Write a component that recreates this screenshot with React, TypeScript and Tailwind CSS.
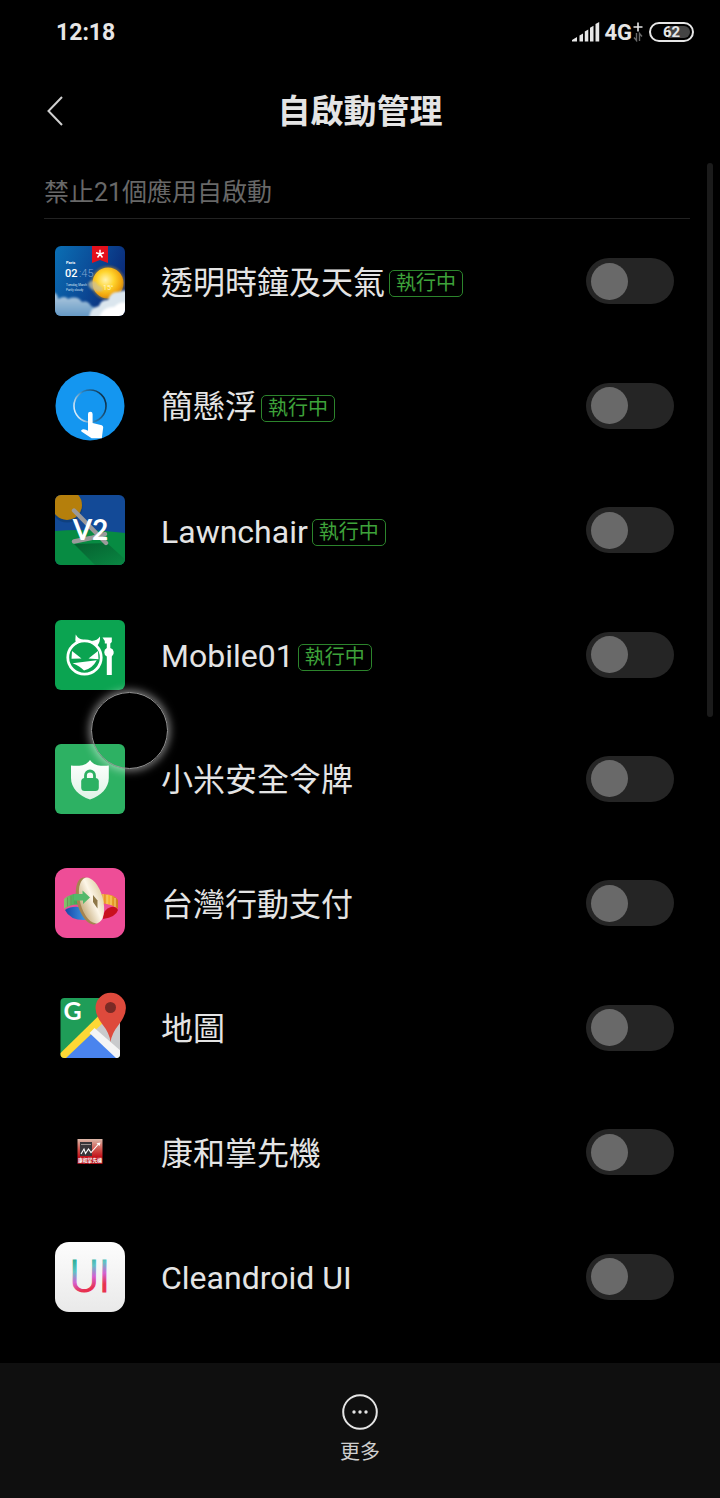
import React, { useState } from 'react';

interface AppItem {
  id: string;
  name: string;
  running?: boolean;
  icon: React.ReactNode;
}

const ClockWeatherIcon = () => (
  <svg viewBox="0 0 70 70" className="w-full h-full">
    <defs>
      <linearGradient id="sky" x1="0" y1="0" x2="1" y2="0.4">
        <stop offset="0" stopColor="#0a6fb4" />
        <stop offset="0.55" stopColor="#0b4c98" />
        <stop offset="1" stopColor="#0a2a78" />
      </linearGradient>
      <radialGradient id="sun" cx="0.42" cy="0.4" r="0.6">
        <stop offset="0" stopColor="#fff3b0" />
        <stop offset="0.45" stopColor="#ffd52e" />
        <stop offset="0.85" stopColor="#f0a30c" />
        <stop offset="1" stopColor="#c98a1c" />
      </radialGradient>
      <linearGradient id="cloud" x1="0" y1="0" x2="0" y2="1">
        <stop offset="0" stopColor="#b9cfe2" />
        <stop offset="1" stopColor="#5f95c2" />
      </linearGradient>
      <filter id="cloudSoft"><feGaussianBlur stdDeviation="1.1" /></filter>
      <clipPath id="clockClip"><rect width="70" height="70" rx="6" /></clipPath>
    </defs>
    <g clipPath="url(#clockClip)">
      <rect width="70" height="70" fill="url(#sky)" />
      <circle cx="53" cy="37" r="17" fill="#b98a2a" opacity="0.5" filter="url(#cloudSoft)" />
      <circle cx="53" cy="37" r="15.5" fill="url(#sun)" />
      <g filter="url(#cloudSoft)">
        <path d="M-2 72V46q5 2 5 7 7-4 10 0 9-4 14 3 6-2 9 4 8 2 9 12z" fill="url(#cloud)" />
        <path d="M33 38q2-4 6-3 3 1 4 4 5 1 5 5-5 3-9 0-5-1-6-6z" fill="#c9c3a4" opacity="0.7" />
        <path d="M34 72q2-11 10-12 2-7 9-6 3-9 10-8 8-3 9 0v26z" fill="#dbe6ee" />
        <path d="M44 72q4-12 15-11 8-7 13-3v14z" fill="#fff" />
      </g>
      <path d="M37 0h16v17l-8-3-8 3z" fill="#e3101c" />
      <path d="M45 8V3.800M45 8l-4-1.300M45 8l4-1.300M45 8l-2.500 3.500M45 8l2.500 3.500" stroke="#fff" strokeWidth="1.500" fill="none" />
      <text x="11" y="18" fontSize="4" fill="#fff" fontWeight="700" fontFamily="Roboto, sans-serif">Paris</text>
      <text x="10" y="31" fontSize="11" fill="#fff" fontWeight="500" fontFamily="Roboto, sans-serif">02</text>
      <text x="24" y="31" fontSize="11" fill="#7fa5cf" fontWeight="300" fontFamily="Roboto, sans-serif">:45</text>
      <text x="11" y="40" fontSize="3" fill="#cfe0f0" fontFamily="Roboto, sans-serif">Tuesday, March</text>
      <text x="11" y="45" fontSize="3" fill="#cfe0f0" fontFamily="Roboto, sans-serif">Partly cloudy</text>
      <text x="48" y="44" fontSize="7" fill="#fff3c8" fontFamily="Roboto, sans-serif">15°</text>
    </g>
  </svg>
);

const FloatTouchIcon = () => (
  <svg viewBox="0 0 70 70" className="w-full h-full">
    <defs>
      <linearGradient id="touchRing" x1="0" y1="0.7" x2="1" y2="0.3">
        <stop offset="0" stopColor="#e8f5ff" />
        <stop offset="0.45" stopColor="#2f80b8" />
        <stop offset="1" stopColor="#0b2e48" />
      </linearGradient>
    </defs>
    <circle cx="35" cy="35" r="34.5" fill="#1496f0" />
    <circle cx="35" cy="35" r="16" fill="none" stroke="url(#touchRing)" strokeWidth="1.6" />
    <path d="M33 43a2.300 2.300 0 0 1 4.600 0v9l9.200 2.200q1.600.6 1.400 2.400l-1.400 10.600H36.600L26.400 60.400q-1-1.600 1-2 3-.5 5.600 1.400z" fill="#fff" />
  </svg>
);

const LawnchairIcon = () => (
  <svg viewBox="0 0 70 70" className="w-full h-full">
    <defs>
      <clipPath id="lawnClip"><rect width="70" height="70" rx="6" /></clipPath>
      <linearGradient id="lawnShade" x1="0" y1="0" x2="1" y2="1">
        <stop offset="0" stopColor="#05602f" />
        <stop offset="1" stopColor="#0a8a44" />
      </linearGradient>
    </defs>
    <g clipPath="url(#lawnClip)">
      <rect width="70" height="70" fill="#134a97" />
      <circle cx="12" cy="12" r="15.500" fill="#0d3a70" opacity="0.6" />
      <circle cx="12" cy="10" r="15" fill="#b57f0c" />
      <path d="M0 36q30-3 70 2v32H0z" fill="#078b42" />
      <path d="M19 49l33-1 22 20v4H42z" fill="url(#lawnShade)" />
      <path d="M19 15.500L51 48M19 46.500l17-3.500 14-4" stroke="#9a9a9a" strokeWidth="4.400" strokeLinecap="round" fill="none" />
      <text x="35.500" y="45" textAnchor="middle" fontSize="28" fontWeight="700" fill="#fff" fontFamily="Lato, sans-serif">V2</text>
    </g>
  </svg>
);

const Mobile01Icon = () => (
  <svg viewBox="0 0 70 70" className="w-full h-full">
    <rect width="70" height="70" rx="6" fill="#0ba451" />
    <circle cx="29.500" cy="37.500" r="16.700" fill="none" stroke="#fff" strokeWidth="2.800" />
    <path d="M20.700 14.500q2.500 4.500 8 5.500l-7.500 4.500q-1.500-4-.5-10zM45 16.500q-2.500 4-8.500 4.500l5.500 5q3.500-4 3-9.500z" fill="#fff" />
    <path d="M17 31l9.500 7.500-10 .3zM43 31l-9.500 7.500 10 .8zM17.500 43.300l24.200-3q-4 8-12.700 10.300-4-4.500-11.500-7.300z" fill="#fff" />
    <path d="M47.500 17.500h9.300v4.500l-1.500 1.500v4.500a4.800 4.800 0 0 1 1.500 8.500V55h-5V36.500a4.800 4.800 0 0 1 0-8.500v-4.500h-2q.5-3-2.300-6z" fill="#fff" />
  </svg>
);

const TokenIcon = () => (
  <svg viewBox="0 0 70 70" className="w-full h-full">
    <defs>
      <linearGradient id="shield" x1="0" y1="0" x2="0" y2="1">
        <stop offset="0" stopColor="#fff" />
        <stop offset="1" stopColor="#dff3e6" />
      </linearGradient>
    </defs>
    <rect width="70" height="70" rx="6" fill="#2db163" />
    <path d="M35 16q2.500 4 7.500 5.200 5.500 1 11.300.3v12.500c0 10-8 18-18.800 21.500C24 52 16 44 16 34V21.500q6 .7 11.500-.3Q32.500 20 35 16z" fill="url(#shield)" />
    <rect x="26.200" y="34" width="17.600" height="13" rx="3.500" fill="#2db163" />
    <path d="M30.500 35v-3.500a4.500 4.500 0 0 1 9 0v3.500" fill="none" stroke="#2db163" strokeWidth="2.800" />
  </svg>
);

const TaiwanPayIcon = () => (
  <svg viewBox="0 0 70 70" className="w-full h-full">
    <defs>
      <linearGradient id="coin" x1="0" y1="0.600" x2="1" y2="0.300">
        <stop offset="0" stopColor="#c9b184" />
        <stop offset="0.550" stopColor="#fdf6e8" />
        <stop offset="1" stopColor="#e2d3ad" />
      </linearGradient>
      <linearGradient id="payGreen" x1="0" y1="0" x2="1" y2="0">
        <stop offset="0" stopColor="#8cbf6d" />
        <stop offset="1" stopColor="#2faf57" />
      </linearGradient>
      <linearGradient id="payOrange" x1="0" y1="0" x2="1" y2="0">
        <stop offset="0" stopColor="#d9661f" />
        <stop offset="0.500" stopColor="#f7b733" />
        <stop offset="1" stopColor="#cf7a1c" />
      </linearGradient>
      <linearGradient id="payBlue" x1="0" y1="0" x2="1" y2="0">
        <stop offset="0" stopColor="#1746a8" />
        <stop offset="1" stopColor="#3f9be6" />
      </linearGradient>
    </defs>
    <rect width="70" height="70" rx="12" fill="#ee4d97" />
    <path d="M10 42q6-4 14-3l8 13q-17 1-22-10z" fill="url(#payBlue)" />
    <path d="M9 41V31q5-5 14-5.500v11q-9 0-14 4.500z" fill="url(#payGreen)" />
    <path d="M12.500 29.500v9M16 28v9M19.500 27v9" stroke="#6a8f55" strokeWidth="0.800" />
    <path d="M48 51q0-10 8-12 5-1 7 3-2 7-15 9z" fill="#c8101e" />
    <path d="M44 26q15-1 19 6v9q-5-5-19-6z" fill="url(#payOrange)" />
    <path d="M48 26v9M52 27v9M56 28v9M60 30v9" stroke="#f9d77a" strokeWidth="1" />
    <ellipse cx="33.500" cy="33" rx="11.500" ry="24" transform="rotate(-15 33.500 33)" fill="#a58450" />
    <ellipse cx="36.500" cy="32.500" rx="11.500" ry="23.500" transform="rotate(-15 36.500 32.500)" fill="url(#coin)" />
    <path d="M38 27l4.500 5.500v8L38 34z" fill="#8d7748" />
    <path d="M19 26h8.500v-3.500l7.500 7-7 6.500v-3.500h-9z" fill="#53b96b" />
  </svg>
);

const MapsIcon = () => (
  <svg viewBox="0 0 70 70" className="w-full h-full overflow-visible">
    <defs>
      <clipPath id="mapClip"><rect x="5.500" y="5" width="59.500" height="60" rx="4" /></clipPath>
    </defs>
    <g clipPath="url(#mapClip)">
      <rect x="5" y="5" width="61" height="60" fill="#1f9d58" />
      <path d="M36 37L66 5v60H60z" fill="#c9cacc" />
      <path d="M8 65l27.500-25L62 65z" fill="#4a84ee" />
      <path d="M5 65V60.500L46 20.500l4 7.500L11 65z" fill="#fdd835" />
      <path d="M34.500 40l5-5L66 58v7h-5z" fill="#f5f5f5" />
    </g>
    <text x="8.500" y="27" fontSize="25" fontWeight="700" fill="#fff" fontFamily="Lato, sans-serif">G</text>
    <path d="M55.500 49q-1-9-8-17.500-7-9-7-16.500a15.200 15.200 0 0 1 30.400 0q0 7.500-7 16.500-7 8.500-8.400 17.500z" fill="#de4a3c" />
    <circle cx="55.500" cy="14.500" r="5.500" fill="#7a2a25" />
  </svg>
);

const StockIcon = () => (
  <svg viewBox="0 0 70 70" className="w-full h-full">
    <defs>
      <linearGradient id="stockBg" x1="0" y1="0" x2="0" y2="1">
        <stop offset="0" stopColor="#dcb9aa" />
        <stop offset="0.450" stopColor="#cf4a44" />
        <stop offset="0.700" stopColor="#c4151d" />
        <stop offset="1" stopColor="#a80f18" />
      </linearGradient>
    </defs>
    <rect x="22.500" y="22" width="25" height="25" fill="url(#stockBg)" />
    <rect x="25" y="25" width="12" height="14" fill="#38363a" />
    <path d="M26 27.500h10" stroke="#99918f" strokeWidth="1" />
    <path d="M26 37l3-5 1.500 4.500 3-4.500 2.500 3.500 8-9" stroke="#fff" strokeWidth="1.100" fill="none" />
    <path d="M45.500 25.500l-4 .8 3 2.700z" fill="#fff" />
    <text x="35" y="44.500" textAnchor="middle" fontSize="4.800" fontWeight="700" fill="#fff" fontFamily="'Noto Sans CJK TC', sans-serif">康和掌先機</text>
  </svg>
);

const CleandroidIcon = () => (
  <svg viewBox="0 0 70 70" className="w-full h-full">
    <defs>
      <linearGradient id="uiBg" x1="0" y1="0" x2="0" y2="1">
        <stop offset="0" stopColor="#fdfdfd" />
        <stop offset="1" stopColor="#e9e9e9" />
      </linearGradient>
      <linearGradient id="uiText" x1="0" y1="0" x2="0.250" y2="1">
        <stop offset="0.200" stopColor="#2fae9a" />
        <stop offset="0.400" stopColor="#5cc4c4" />
        <stop offset="0.600" stopColor="#d45fd0" />
        <stop offset="0.800" stopColor="#e8304f" />
      </linearGradient>
    </defs>
    <rect width="70" height="70" rx="14" fill="url(#uiBg)" />
    <text x="35" y="50" textAnchor="middle" fontSize="44" fill="url(#uiText)" stroke="url(#uiText)" strokeWidth="1.200" fontFamily="Roboto, sans-serif" fontWeight="300">UI</text>
  </svg>
);

const apps: AppItem[] = [
  { id: 'clock-weather', name: '透明時鐘及天氣', running: true, icon: <ClockWeatherIcon /> },
  { id: 'float-touch', name: '簡懸浮', running: true, icon: <FloatTouchIcon /> },
  { id: 'lawnchair', name: 'Lawnchair', running: true, icon: <LawnchairIcon /> },
  { id: 'mobile01', name: 'Mobile01', running: true, icon: <Mobile01Icon /> },
  { id: 'mi-token', name: '小米安全令牌', icon: <TokenIcon /> },
  { id: 'taiwan-pay', name: '台灣行動支付', icon: <TaiwanPayIcon /> },
  { id: 'maps', name: '地圖', icon: <MapsIcon /> },
  { id: 'concord', name: '康和掌先機', icon: <StockIcon /> },
  { id: 'cleandroid', name: 'Cleandroid UI', icon: <CleandroidIcon /> },
];

const StatusBar = () => (
  <div className="h-16 pl-14 pr-[26px] flex items-center justify-between text-[#e6e6e6] font-bold">
    <span className="pt-0.5 text-[23px]">12:18</span>
    <div className="flex items-center">
      <svg viewBox="0 0 28 20" className="w-7 h-5 mr-1" fill="#e6e6e6">
        <path d="M0 19.500V18l5-3v4.500zM7.500 19.500v-6l3.500-2v8zM12.800 19.500V9.500l3.500-2v12zM18 19.500V5.800l3.500-2v15.700zM23.500 19.500V2l3.700-2v19.500z" />
      </svg>
      <span className="text-[22px]">4G</span>
      <svg viewBox="0 0 12 20" className="w-3 h-5 mr-[5px]" fill="none">
        <path d="M6 0.500v9M1.500 5h9" stroke="#e6e6e6" strokeWidth="1.600" />
        <path d="M4.500 11v7.500l-2.500-3M7.500 19v-7.500l2.500 3" stroke="#6a6a6a" strokeWidth="1.400" />
      </svg>
      <div className="w-[45px] h-5 rounded-full border-2 border-[#e6e6e6] p-0.5">
        <div className="h-full rounded-full bg-linear-to-r from-black from-40% to-[#444] to-40% flex items-center justify-center text-[15px]">
          62
        </div>
      </div>
    </div>
  </div>
);

interface AppRowProps {
  app: AppItem;
  checked: boolean;
  onToggle: () => void;
}

const AppRow: React.FC<AppRowProps> = ({ app, checked, onToggle }) => (
  <li className="pl-[55px] pr-[46px] flex items-center">
    <div className="w-[70px] h-[70px] shrink-0">{app.icon}</div>
    <div className="ml-9 pt-[3px] flex-1 flex items-center gap-1">
      <label htmlFor={app.id} className="text-[32px] leading-[46px]">{app.name}</label>
      {app.running && (
        <span className="mt-0.5 px-1.5 rounded-[5px] border border-[#2c842c] text-[#3ea23a] text-[20px] leading-[25px]">
          執行中
        </span>
      )}
    </div>
    <input
      id={app.id}
      type="checkbox"
      role="switch"
      checked={checked}
      onChange={onToggle}
      className="appearance-none shrink-0 w-[88px] h-[46px] px-[5px] rounded-full bg-[#252525] flex items-center checked:justify-end checked:bg-[#1f6fd0] before:block before:w-[37px] before:h-[37px] before:rounded-full before:bg-[#696969]"
    />
  </li>
);

const App: React.FC = () => {
  const [enabled, setEnabled] = useState<Record<string, boolean>>({});

  const toggle = (id: string) => setEnabled((prev) => ({ ...prev, [id]: !prev[id] }));

  return (
    <div className="relative min-h-screen flex flex-col bg-black text-[#e4e4e4] font-[Roboto,'Noto_Sans_CJK_TC',sans-serif]">
      <StatusBar />

      <header className="h-[94px] px-[35px] grid grid-cols-[40px_1fr_40px] items-center">
        <button type="button" aria-label="返回" className="w-10 h-10 flex items-center justify-center">
          <svg viewBox="0 0 16 30" className="w-4 h-[30px]" fill="none" stroke="#d0d0d0" strokeWidth="2">
            <path d="M15 1L1.500 15 15 29" />
          </svg>
        </button>
        <h1 className="pt-0.5 text-center text-[33px] leading-[48px] font-bold">自啟動管理</h1>
      </header>

      <h2 className="ml-11 mr-[30px] pt-4 pb-1.5 border-b border-[#222] text-[25px] leading-[38px] text-[#686868]">
        禁止21個應用自啟動
      </h2>

      <ul className="flex-1 pb-6 grid auto-rows-fr">
        {apps.map((app) => (
          <AppRow key={app.id} app={app} checked={!!enabled[app.id]} onToggle={() => toggle(app.id)} />
        ))}
      </ul>

      <footer className="pt-[31px] pb-8 bg-[#0f0f0f] flex justify-center">
        <button type="button" className="flex flex-col items-center gap-2 text-[20px] leading-7 text-[#cfcfcf]">
          <svg viewBox="0 0 36 36" className="w-9 h-9" fill="#e4e4e4">
            <circle cx="18" cy="18" r="16.800" fill="none" stroke="#e4e4e4" strokeWidth="2" />
            <circle cx="12" cy="18" r="1.700" />
            <circle cx="18" cy="18" r="1.700" />
            <circle cx="24" cy="18" r="1.700" />
          </svg>
          更多
        </button>
      </footer>

      {/* scroll thumb */}
      <div className="absolute right-[7px] top-[163px] w-1.5 h-[554px] rounded-full bg-[#1b1b1b]" />

      {/* floating touch ball */}
      <div className="absolute left-[91px] top-[692px] w-[77px] h-[77px] rounded-full border border-[#999] shadow-[0_0_8px_2px_rgba(255,255,255,0.5)] pointer-events-none" />
    </div>
  );
};

export default App;
